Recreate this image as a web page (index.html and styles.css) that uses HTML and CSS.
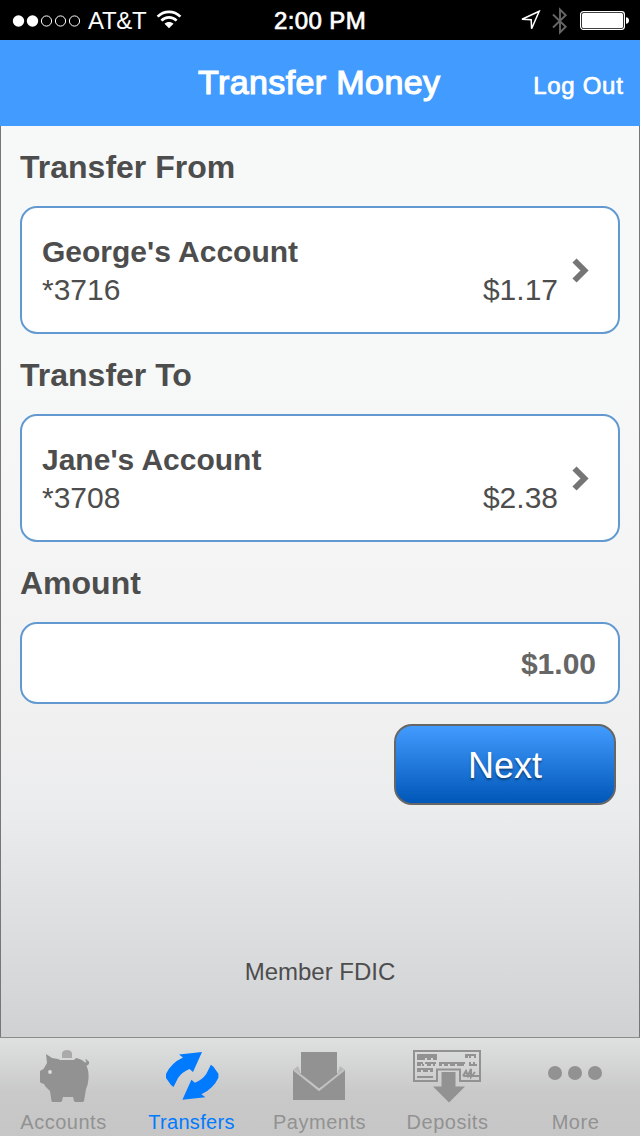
FILE: index.html
```html
<!DOCTYPE html>
<html lang="en">
<head>
  <meta charset="UTF-8">
  <title>Transfer Money</title>
  <link rel="stylesheet" href="styles.css">
</head>
<body>
<div class="statusbar">
  <div class="carrier">
    <svg class="signal" width="70" height="14" viewBox="0 0 70 14">
      <circle cx="6.5" cy="7" r="5.7" fill="#fff"/>
      <circle cx="20.5" cy="7" r="5.7" fill="#fff"/>
      <g fill="none" stroke="#fff">
        <circle cx="34.5" cy="7" r="5.1"/>
        <circle cx="48.5" cy="7" r="5.1"/>
        <circle cx="62.5" cy="7" r="5.1"/>
      </g>
    </svg>
    <span class="name">AT&amp;T</span>
    <svg class="wifi" width="26" height="19" viewBox="0 0 26 19">
      <g fill="none" stroke="#fff" stroke-width="2.7">
        <path d="M1.6 6.6C8 .3 18 .3 24.4 6.6"/>
        <path d="M5.4 10.6c4.3-4.2 10.9-4.2 15.2 0"/>
      </g>
      <path d="M8.5 13.8c2.5-2.4 6.5-2.4 9 0L13 18.3z" fill="#fff"/>
    </svg>
  </div>
  <div class="clock">2:00 PM</div>
  <div class="indicators">
    <svg width="22" height="22" viewBox="0 0 22 22">
      <path d="M2 9.2L19.2 1.2 11.6 18.8 11.2 9.7z" fill="none" stroke="#fff" stroke-width="1.5"/>
    </svg>
    <svg class="bluetooth" width="16" height="28" viewBox="0 0 16 28">
      <path d="M1 7.5l12.7 12.3L8 25.4V2.6l5.7 5.6L1 20.5" fill="none" stroke="#666" stroke-width="1.9"/>
    </svg>
    <svg class="battery" width="50" height="20" viewBox="0 0 50 20">
      <rect x=".6" y=".6" width="43.8" height="17.8" rx="2.8" fill="none" stroke="#fff" stroke-width="1.2"/>
      <rect x="2" y="2" width="41" height="15" rx="1.5" fill="#fff"/>
      <path d="M46 6.2c4 0 4 6.6 0 6.6z" fill="#fff"/>
    </svg>
  </div>
</div>

<div class="header">
  <h1>Transfer Money</h1>
  <a class="logout">Log Out</a>
</div>

<div class="content">
  <h2>Transfer From</h2>
  <div class="card">
    <div class="account">
      <b>George's Account</b>
      <div class="row"><span>*3716</span><span>$1.17</span></div>
    </div>
    <svg class="chevron" width="18" height="30" viewBox="0 0 18 30">
      <path d="M2.5 4.5l10 10-10 10" fill="none" stroke="#757575" stroke-width="5.8"/>
    </svg>
  </div>
  <h2>Transfer To</h2>
  <div class="card">
    <div class="account">
      <b>Jane's Account</b>
      <div class="row"><span>*3708</span><span>$2.38</span></div>
    </div>
    <svg class="chevron" width="18" height="30" viewBox="0 0 18 30">
      <path d="M2.5 4.5l10 10-10 10" fill="none" stroke="#757575" stroke-width="5.8"/>
    </svg>
  </div>
  <h2>Amount</h2>
  <div class="amount">$1.00</div>
  <div class="next">Next</div>
  <div class="fdic">Member FDIC</div>
</div>

<div class="tabbar">
  <div class="tab">
    <svg width="72" height="56" viewBox="0 0 72 56">
      <path d="M35 10V5q1-3 5-3t5 3v5z" fill="#aaa"/>
      <path d="M19 6L25 10 31 11 33 12H47L49 10Q55 11 58 14.500L59.500 14 58 11.500 60 11.500 61 13.500 62 13V16L59.500 18Q62 23 61.500 31 61 37 59 41L57 53 56 54H48L47 53 46 49H36L35 53 34 54H25.500L24.500 53 23 43 18 38 17 36 14 35 13 34V23L16.500 21 20 15z" fill="#929292"/>
      <circle cx="23" cy="24" r="1.9" fill="#ddd"/>
    </svg>
    <span>Accounts</span>
  </div>
  <div class="tab active">
    <svg width="72" height="56" viewBox="0 0 72 56">
      <g fill="#007aff">
        <path d="M24 6.5L47 4 38 24 34.500 21Q27 24 23 30L18.500 39 16 37 11 30V26Q16 15 28 9.500z"/>
        <path d="M24 6.5L47 4 38 24 34.500 21Q27 24 23 30L18.500 39 16 37 11 30V26Q16 15 28 9.500z" transform="rotate(180 37.200 27.900)"/>
      </g>
    </svg>
    <span>Transfers</span>
  </div>
  <div class="tab">
    <svg width="72" height="56" viewBox="0 0 72 56">
      <path d="M18 4h36v25L36 40.500 18 26z" fill="#929292"/>
      <path d="M10 22l6 2 20 18 20-18 6-2v30H10z" fill="#929292"/>
      <path d="M10 22l5-4 2 5v4zM62 22l-5-4-2 5v4z" fill="#b8b8b8"/>
      <path d="M11 22l25 20 25-20" fill="none" stroke="#c2c2c2" stroke-width="2"/>
    </svg>
    <span>Payments</span>
  </div>
  <div class="tab">
    <svg width="72" height="56" viewBox="0 0 72 56">
      <path d="M26 33H3V3h66v30H49V21.5H26z" fill="none" stroke="#929292" stroke-width="2"/>
      <g fill="none" stroke="#929292" stroke-width="2">
        <path d="M6 7h20M6 9h20M6 11h8m2 0h4m2 0h4M54 7h11M54 9h3m1 0h2m3 0h2M6 15h6m2 0h11M28 15h26M6 17h4m1 0h2m3 0h4m2 0h2M28 17h3m2 0h4m2 0h5m2 0h7M58 15h2m2 0h2M58 17h8M6 21h16M6 23h4m2 0h5m2 0h3M6 29h16"/>
        <path d="M52 28h16M52 28l3-5 2 5 3-7v8l4-5"/>
      </g>
      <path d="M30.5 24h14v14.5H54L38 54.5 22 38.5h8.500z" fill="#929292"/>
    </svg>
    <span>Deposits</span>
  </div>
  <div class="tab">
    <svg width="72" height="56" viewBox="0 0 72 56">
      <g fill="#929292">
        <circle cx="16" cy="25" r="7"/>
        <circle cx="36" cy="25" r="7"/>
        <circle cx="56" cy="25" r="7"/>
      </g>
    </svg>
    <span>More</span>
  </div>
</div>
</body>
</html>
```
FILE: styles.css
```css
* {
  margin: 0;
  padding: 0;
  box-sizing: border-box;
}

body {
  width: 640px;
  height: 1136px;
  overflow: hidden;
  font-family: "Liberation Sans", Arial, sans-serif;
  color: #4d4d4d;
}

svg {
  display: block;
  flex: none;
}

.statusbar {
  display: grid;
  grid-template-columns: 220px 200px 220px;
  height: 40px;
  background: #000;
  color: #fff;
  font-size: 24px;
  line-height: 41px;
}

.carrier {
  display: flex;
  align-items: center;
  padding-left: 12px;
}

.carrier .name {
  width: 58px;
  margin-left: 6px;
  letter-spacing: -0.3px;
}

.wifi {
  margin: 0 0 2px 10px;
}

.clock {
  letter-spacing: 0.4px;
  text-align: center;
  -webkit-text-stroke: 0.7px #fff;
}

.indicators {
  display: flex;
  align-items: center;
  justify-content: flex-end;
  padding-right: 10px;
}

.bluetooth {
  margin-left: 10px;
}

.battery {
  margin-left: 12px;
}

.header {
  display: grid;
  grid-template-columns: 1fr 244px 1fr;
  height: 86px;
  background: #429bfe;
  color: #fff;
  white-space: nowrap;
}

.header h1 {
  grid-column: 2;
  font-size: 34px;
  font-weight: normal;
  line-height: 84px;
  letter-spacing: 0.4px;
  -webkit-text-stroke: 1.2px #fff;
}

.logout {
  font-size: 24px;
  line-height: 92px;
  letter-spacing: 0.7px;
  text-align: right;
  padding-right: 16.5px;
  -webkit-text-stroke: 0.7px #fff;
}

.content {
  height: 911px;
  padding: 0 19px;
  border: 1px solid #777;
  border-width: 0 1px;
  background: linear-gradient(#f7f9f8 0%, #f7f9f8 25%, #f2f2f2 60%, #ebeced 75%, #d0d1d3 100%);
}

.content h2 {
  height: 80px;
  padding-top: 2px;
  font-size: 32px;
  line-height: 78px;
}

.card,
.amount {
  display: flex;
  background: #fff;
  border: 2px solid #6299d0;
  border-radius: 17px;
}

.card {
  height: 128px;
  padding: 25px 28px 0 20px;
  font-size: 30px;
  line-height: 38px;
}

.account {
  flex: 1;
}

.row {
  display: flex;
  justify-content: space-between;
}

.chevron {
  margin: 23px 0 0 14px;
  filter: blur(0.7px);
}

.amount {
  height: 82px;
  justify-content: flex-end;
  padding-right: 22px;
  color: #666;
  font-size: 30px;
  font-weight: bold;
  line-height: 80px;
}

.next {
  width: 222px;
  height: 81px;
  margin: 20px 4px 0 auto;
  border: 2px solid #666;
  border-radius: 18px;
  background: linear-gradient(#429bfe, #0057b8);
  color: #fff;
  font-size: 36px;
  line-height: 79px;
  text-align: center;
  text-shadow: 0 2px 2px rgba(0, 0, 0, 0.4);
}

.fdic {
  margin-top: 147px;
  font-size: 24px;
  line-height: 40px;
  text-align: center;
}

.tabbar {
  display: grid;
  grid-template-columns: repeat(5, 128px);
  height: 99px;
  border-top: 1px solid #8c8c8c;
  background: linear-gradient(#dfe1e1 0, #c9c9c9 55%, #c6c6c6 100%);
  color: #929292;
  font-size: 20px;
  line-height: 24px;
  letter-spacing: 0.5px;
  text-align: center;
}

.tab {
  padding: 10px 1px 0 0;
}

.tab svg {
  margin: 0 27px 6px;
}

.tab.active {
  color: #007aff;
  letter-spacing: 0.3px;
}
```
